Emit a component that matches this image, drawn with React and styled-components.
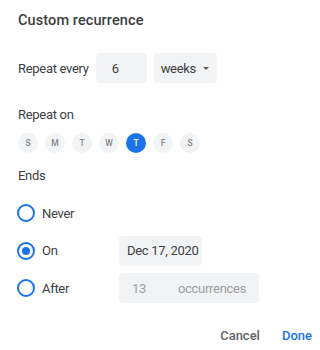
import React, { useState } from 'react';
import styled, { createGlobalStyle } from 'styled-components';

const GlobalStyle = createGlobalStyle`
  html, body {
    margin: 0;
    padding: 0;
    background: #fff;
  }
  body {
    font-family: Roboto, "Liberation Sans", Arial, sans-serif;
    color: #3c4043;
    letter-spacing: -0.3px;
  }
`;

const Dialog = styled.div`
  width: 320px;
  height: 350px;
  box-sizing: border-box;
  padding: 11px 7px 0 18px;
  display: flex;
  flex-direction: column;
`;

const Title = styled.h2`
  margin: 0;
  font-size: 14.5px;
  line-height: 20px;
  font-weight: 500;
  letter-spacing: 0.1px;
  color: #3c4043;
`;

const Label = styled.div`
  font-size: 13px;
  line-height: 20px;
  margin-top: ${(p) => p.$top}px;
`;

const RepeatRow = styled.div`
  display: flex;
  align-items: center;
  height: 30px;
  margin-top: 22px;
  font-size: 13px;
`;

const Field = styled.div`
  display: flex;
  align-items: center;
  box-sizing: border-box;
  height: 30px;
  width: ${(p) => p.$width}px;
  margin-left: ${(p) => p.$left || 0}px;
  padding-left: ${(p) => p.$pad || 8}px;
  background: #f1f3f4;
  border-radius: 4px;
  font-size: 13px;
  white-space: nowrap;
  color: ${(p) => (p.$disabled ? '#9aa0a6' : '#3c4043')};
`;

const Caret = styled.span`
  margin-left: auto;
  margin-right: 8px;
  width: 0;
  height: 0;
  border-left: 3.5px solid transparent;
  border-right: 3.5px solid transparent;
  border-top: 3.5px solid #5f6368;
`;

const Days = styled.div`
  display: flex;
  gap: 7px;
  margin-top: 8px;
`;

const Day = styled.button`
  width: 20px;
  height: 20px;
  padding: 0;
  border: none;
  border-radius: 50%;
  font-family: inherit;
  font-size: 8.5px;
  font-weight: 500;
  letter-spacing: 0;
  background: ${(p) => (p.$active ? '#1a73e8' : '#f1f3f4')};
  color: ${(p) => (p.$active ? '#fff' : '#80868b')};
  cursor: pointer;
`;

const Options = styled.div`
  display: flex;
  flex-direction: column;
  gap: 7.5px;
  margin-top: 12px;
`;

const OptionRow = styled.label`
  display: flex;
  align-items: center;
  height: 30px;
  font-size: 13px;
  cursor: pointer;
`;

const OptionName = styled.span`
  display: flex;
  align-items: center;
  width: 102px;
  margin-left: -1px;
`;

const Radio = styled.span`
  box-sizing: border-box;
  width: 18px;
  height: 18px;
  border: 2px solid #1a73e8;
  border-radius: 50%;
  margin-right: 7px;
  display: flex;
  align-items: center;
  justify-content: center;

  &::after {
    content: '';
    width: 8px;
    height: 8px;
    border-radius: 50%;
    background: ${(p) => (p.$checked ? '#1a73e8' : 'transparent')};
  }
`;

const Count = styled.span`
  width: 46px;
`;

const Footer = styled.div`
  display: flex;
  justify-content: flex-end;
  gap: 10px;
  margin-top: 22px;
`;

const TextButton = styled.button`
  border: none;
  background: none;
  padding: 0 1px;
  height: 20px;
  font-family: inherit;
  font-size: 13px;
  font-weight: 500;
  letter-spacing: 0;
  color: ${(p) => (p.$primary ? '#1a73e8' : '#5f6368')};
  margin-left: ${(p) => (p.$primary ? 10 : 0)}px;
  cursor: pointer;
`;

const days = ['S', 'M', 'T', 'W', 'T', 'F', 'S'];

export default function App() {
  const [day, setDay] = useState(4);
  const [ends, setEnds] = useState('on');

  return (
    <>
      <GlobalStyle />
      <Dialog>
        <Title>Custom recurrence</Title>

        <RepeatRow>
          Repeat every
          <Field $width={51} $left={7} $pad={16}>6</Field>
          <Field $width={63} $left={7} $pad={7}>
            weeks
            <Caret />
          </Field>
        </RepeatRow>

        <Label $top={22}>Repeat on</Label>
        <Days>
          {days.map((d, i) => (
            <Day key={i} $active={i === day} onClick={() => setDay(i)}>
              {d}
            </Day>
          ))}
        </Days>

        <Label $top={13}>Ends</Label>
        <Options>
          <OptionRow onClick={() => setEnds('never')}>
            <OptionName>
              <Radio $checked={ends === 'never'} />
              Never
            </OptionName>
          </OptionRow>
          <OptionRow onClick={() => setEnds('on')}>
            <OptionName>
              <Radio $checked={ends === 'on'} />
              On
            </OptionName>
            <Field $width={83}>Dec 17, 2020</Field>
          </OptionRow>
          <OptionRow onClick={() => setEnds('after')}>
            <OptionName>
              <Radio $checked={ends === 'after'} />
              After
            </OptionName>
            <Field $width={140} $pad={13} $disabled>
              <Count>13</Count>
              occurrences
            </Field>
          </OptionRow>
        </Options>

        <Footer>
          <TextButton>Cancel</TextButton>
          <TextButton $primary>Done</TextButton>
        </Footer>
      </Dialog>
    </>
  );
}
